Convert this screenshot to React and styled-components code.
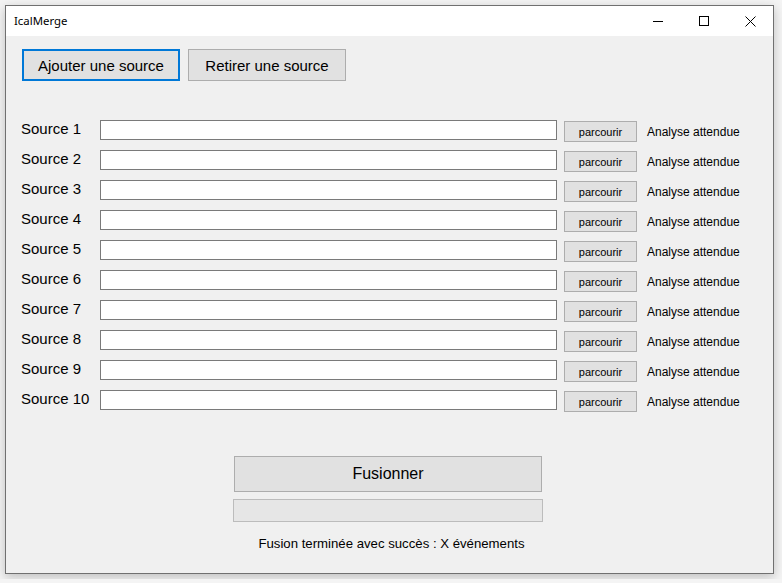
import styled, { createGlobalStyle } from 'styled-components';

const GlobalStyle = createGlobalStyle`
  html, body {
    margin: 0;
    padding: 0;
    background: #f4f4f4;
  }
  body {
    padding: 5px;
    font-family: "Liberation Sans", Arial, sans-serif;
    color: #000;
  }
`;

const Window = styled.div`
  width: 767px;
  height: 567px;
  border: 1px solid #707070;
  background: #f0f0f0;
  box-shadow: 0 3px 10px rgba(0, 0, 0, 0.22);
  display: flex;
  flex-direction: column;
`;

const TitleBar = styled.div`
  height: 30px;
  background: #fff;
  display: flex;
  align-items: center;
  padding-left: 8px;
`;

const Title = styled.div`
  flex: 1;
  font-family: "Noto Sans", "Segoe UI", sans-serif;
  font-size: 11.4px;
  color: #000;
  margin-top: -1px;
`;

const CaptionButton = styled.div`
  width: 46px;
  height: 30px;
  display: flex;
  align-items: center;
  justify-content: center;
`;

const Body = styled.div`
  flex: 1;
  padding: 13px 0 0 16px;
  display: flex;
  flex-direction: column;
`;

const Toolbar = styled.div`
  display: flex;
  gap: 8px;
`;

const ToolButton = styled.button`
  box-sizing: border-box;
  width: 158px;
  height: 32px;
  padding: 0;
  font-family: "Liberation Sans", Arial, sans-serif;
  font-size: 15px;
  color: #000;
  background: #e1e1e1;
  border: ${({ $focused }) => ($focused ? '2px solid #0078d7' : '1px solid #adadad')};
`;

const SourceList = styled.div`
  margin-top: 39px;
  margin-left: -1px;
  display: flex;
  flex-direction: column;
`;

const SourceRow = styled.div`
  height: 30px;
  display: flex;
  align-items: flex-start;
`;

const SourceLabel = styled.div`
  width: 79px;
  font-size: 15px;
  line-height: 17px;
`;

const PathInput = styled.div`
  box-sizing: border-box;
  width: 457px;
  height: 20px;
  background: #fff;
  border: 1px solid #7a7a7a;
`;

const BrowseButton = styled.button`
  box-sizing: border-box;
  width: 73px;
  height: 21px;
  margin: 1px 0 0 7px;
  padding: 1px 0 0;
  font-family: "Liberation Sans", Arial, sans-serif;
  font-size: 11px;
  color: #000;
  background: #e1e1e1;
  border: 1px solid #adadad;
`;

const SourceStatus = styled.div`
  margin: 5px 0 0 10px;
  font-size: 12px;
  line-height: 14px;
  white-space: nowrap;
`;

const Footer = styled.div`
  margin-top: 36px;
  margin-left: 211px;
  width: 310px;
  display: flex;
  flex-direction: column;
  align-items: center;
`;

const MergeButton = styled.button`
  box-sizing: border-box;
  width: 308px;
  height: 36px;
  padding: 0;
  font-family: "Liberation Sans", Arial, sans-serif;
  font-size: 16px;
  color: #000;
  background: #e1e1e1;
  border: 1px solid #adadad;
`;

const Progress = styled.div`
  box-sizing: border-box;
  margin-top: 7px;
  width: 310px;
  height: 23px;
  background: #e6e6e6;
  border: 1px solid #bcbcbc;
`;

const ResultText = styled.div`
  margin-top: 14px;
  margin-left: 7px;
  font-size: 13.2px;
  line-height: 15px;
  white-space: nowrap;
`;

const sources = Array.from({ length: 10 }, (_, i) => `Source ${i + 1}`);

export default function App() {
  return (
    <>
      <GlobalStyle />
      <Window>
        <TitleBar>
          <Title>IcalMerge</Title>
          <CaptionButton>
            <svg width="10" height="10" viewBox="0 0 10 10">
              <line x1="0" y1="5.5" x2="10" y2="5.5" stroke="#000" strokeWidth="1" />
            </svg>
          </CaptionButton>
          <CaptionButton>
            <svg width="10" height="10" viewBox="0 0 10 10">
              <rect x="0.5" y="0.5" width="9" height="9" fill="none" stroke="#000" strokeWidth="1" />
            </svg>
          </CaptionButton>
          <CaptionButton>
            <svg width="11" height="11" viewBox="0 0 11 11">
              <path d="M0.5 0.5 L10.5 10.5 M10.5 0.5 L0.5 10.5" stroke="#000" strokeWidth="1" />
            </svg>
          </CaptionButton>
        </TitleBar>

        <Body>
          <Toolbar>
            <ToolButton $focused>Ajouter une source</ToolButton>
            <ToolButton>Retirer une source</ToolButton>
          </Toolbar>

          <SourceList>
            {sources.map((name) => (
              <SourceRow key={name}>
                <SourceLabel>{name}</SourceLabel>
                <PathInput />
                <BrowseButton>parcourir</BrowseButton>
                <SourceStatus>Analyse attendue</SourceStatus>
              </SourceRow>
            ))}
          </SourceList>

          <Footer>
            <MergeButton>Fusionner</MergeButton>
            <Progress />
            <ResultText>Fusion terminée avec succès : X événements</ResultText>
          </Footer>
        </Body>
      </Window>
    </>
  );
}
